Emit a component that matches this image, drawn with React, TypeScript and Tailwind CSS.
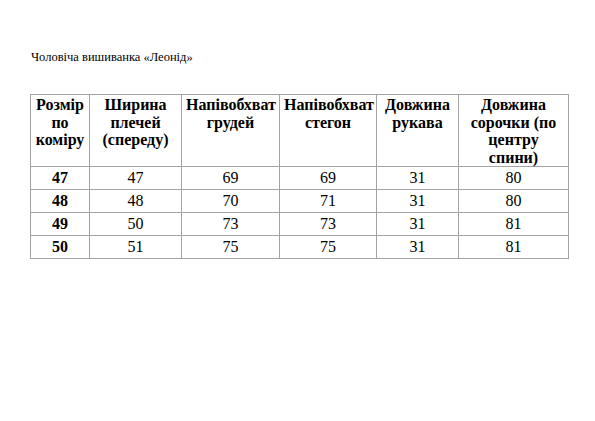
const headers = [
  'Розмір по коміру',
  'Ширина плечей (спереду)',
  'Напівобхват грудей',
  'Напівобхват стегон',
  'Довжина рукава',
  'Довжина сорочки (по центру спини)',
];

const rows = [
  ['47', '47', '69', '69', '31', '80'],
  ['48', '48', '70', '71', '31', '80'],
  ['49', '50', '73', '73', '31', '81'],
  ['50', '51', '75', '75', '31', '81'],
];

const widths = ['w-[59px]', 'w-[92px]', 'w-[98px]', 'w-[97px]', 'w-[82px]', 'w-[110px]'];

export default function App() {
  return (
    <div className="w-[595px] h-[421px] bg-white text-black font-['Liberation_Serif',serif] pl-[31px] pt-[50px]">
      <p className="font-['Liberation_Serif',serif] text-[12.5px] leading-[14px]">Чоловіча вишиванка «Леонід»</p>

      <table className="mt-[30px] table-fixed border-collapse w-[539px] ml-[-1px]">
        <colgroup>
          {widths.map((w, i) => (
            <col key={i} className={w} />
          ))}
        </colgroup>
        <thead>
          <tr className="h-[71px]">
            {headers.map((h) => (
              <th
                key={h}
                className="border border-[#a3a3a3] align-top text-center font-['Liberation_Serif',serif] font-bold text-[16px] leading-[17.5px] px-[4px] pt-px"
              >
                {h}
              </th>
            ))}
          </tr>
        </thead>
        <tbody>
          {rows.map((r) => (
            <tr key={r[0]} className="h-[23px]">
              {r.map((c, i) => (
                <td
                  key={i}
                  className={
                    "border border-[#a3a3a3] text-center font-['Liberation_Serif',serif] text-[16px] leading-[18px] p-0 " +
                    (i === 0 ? 'font-bold' : '')
                  }
                >
                  {c}
                </td>
              ))}
            </tr>
          ))}
        </tbody>
      </table>
    </div>
  );
}
